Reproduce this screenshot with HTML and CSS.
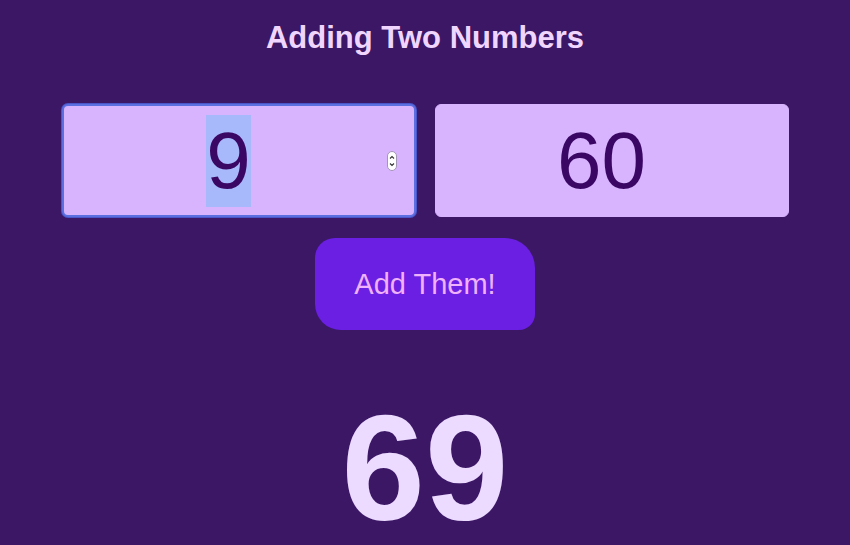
FILE: index.html
```html
<!DOCTYPE html>
<html>
<head>
<meta charset="utf-8">
<link rel="stylesheet" href="styles.css">
</head>
<body>
<main class="app">
  <h1 class="title">Adding Two Numbers</h1>
  <div class="inputs">
    <div class="field">
      <input id="a" class="num" type="number" value="9">
      <span class="spin" aria-hidden="true">
        <svg width="10" height="20" viewBox="0 0 10 20">
          <rect x="0.5" y="0.5" width="9" height="19" rx="4.5" fill="#ffffff" stroke="#a395b5"/>
          <path d="M3 7.5 L5 5.5 L7 7.5" fill="none" stroke="#333" stroke-width="1.1"/>
          <path d="M3 12.5 L5 14.5 L7 12.5" fill="none" stroke="#333" stroke-width="1.1"/>
        </svg>
      </span>
    </div>
    <div class="field">
      <input id="b" class="num" type="number" value="60">
    </div>
  </div>
  <button class="add">Add Them!</button>
  <div class="result">69</div>
</main>
<script src="script.js"></script>
</body>
</html>
```
FILE: styles.css
```css
html, body {
  margin: 0;
  padding: 0;
  background: #3b1766;
  height: 100%;
}
.app {
  display: flex;
  flex-direction: column;
  align-items: center;
  font-family: "Liberation Sans", Arial, sans-serif;
}
.title {
  margin: 20px 0 0;
  font-size: 31px;
  line-height: 36px;
  font-weight: bold;
  color: #f0d6ff;
}
.inputs {
  display: flex;
  gap: 19px;
  margin-top: 48px;
}
.field {
  position: relative;
}
.num {
  display: block;
  box-sizing: border-box;
  width: 354px;
  height: 113px;
  border: 1px solid #d8b4fe;
  border-radius: 6px;
  background: #d8b4fe;
  color: #3b0764;
  font-family: "Liberation Sans", Arial, sans-serif;
  font-size: 80px;
  text-align: center;
  padding: 0 28px 0 8px;
  outline: none;
  -moz-appearance: textfield;
}
.num::-webkit-inner-spin-button,
.num::-webkit-outer-spin-button {
  -webkit-appearance: none;
  margin: 0;
}
.num:focus {
  border: 2px solid #5b6fe0;
  box-shadow: 0 0 0 1px #4a55c8;
}
.num::selection {
  background: #a7b8fb;
  color: #3b0764;
}
.spin {
  position: absolute;
  left: 325px;
  top: 47px;
  width: 10px;
  height: 20px;
  display: block;
  line-height: 0;
}
.add {
  margin-top: 21px;
  width: 220px;
  height: 92px;
  border: none;
  background: #6a1fe2;
  color: #f0b2fc;
  font-family: "Liberation Sans", Arial, sans-serif;
  font-size: 29px;
  border-radius: 20px 30px 16px 26px;
  cursor: pointer;
  padding: 0;
}
.result {
  margin-top: 78px;
  font-size: 150px;
  line-height: 120px;
  font-weight: bold;
  color: #ecdaff;
}
```
FILE: script.js
```js
var a = document.getElementById('a');
a.focus();
a.select();
```
